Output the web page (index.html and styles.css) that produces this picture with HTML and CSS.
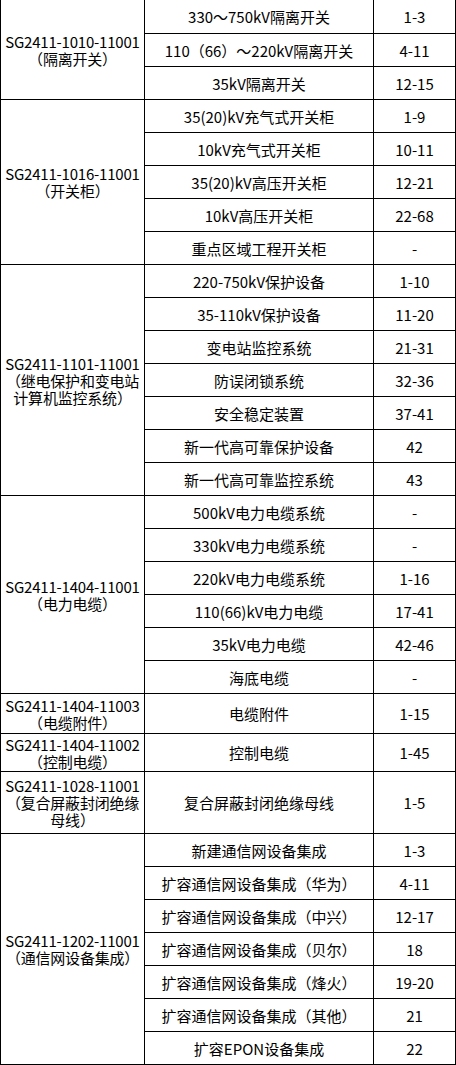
FILE: index.html
```html
<!DOCTYPE html>
<html lang="zh-CN">
<head>
<meta charset="utf-8">
<title>设备清单</title>
<link rel="stylesheet" href="styles.css">
</head>
<body>
<div class="table">
  <div class="code g3">SG2411-1010-11001<br>（隔离开关）</div>
  <div class="name">330～750kV隔离开关</div><div class="num">1-3</div>
  <div class="name">110（66）～220kV隔离开关</div><div class="num">4-11</div>
  <div class="name">35kV隔离开关</div><div class="num">12-15</div>

  <div class="code g5">SG2411-1016-11001<br>（开关柜）</div>
  <div class="name">35(20)kV充气式开关柜</div><div class="num">1-9</div>
  <div class="name">10kV充气式开关柜</div><div class="num">10-11</div>
  <div class="name">35(20)kV高压开关柜</div><div class="num">12-21</div>
  <div class="name">10kV高压开关柜</div><div class="num">22-68</div>
  <div class="name">重点区域工程开关柜</div><div class="num">-</div>

  <div class="code g7">SG2411-1101-11001<br>（继电保护和变电站<br>计算机监控系统）</div>
  <div class="name">220-750kV保护设备</div><div class="num">1-10</div>
  <div class="name">35-110kV保护设备</div><div class="num">11-20</div>
  <div class="name">变电站监控系统</div><div class="num">21-31</div>
  <div class="name">防误闭锁系统</div><div class="num">32-36</div>
  <div class="name">安全稳定装置</div><div class="num">37-41</div>
  <div class="name">新一代高可靠保护设备</div><div class="num">42</div>
  <div class="name">新一代高可靠监控系统</div><div class="num">43</div>

  <div class="code g6">SG2411-1404-11001<br>（电力电缆）</div>
  <div class="name">500kV电力电缆系统</div><div class="num">-</div>
  <div class="name">330kV电力电缆系统</div><div class="num">-</div>
  <div class="name">220kV电力电缆系统</div><div class="num">1-16</div>
  <div class="name">110(66)kV电力电缆</div><div class="num">17-41</div>
  <div class="name">35kV电力电缆</div><div class="num">42-46</div>
  <div class="name">海底电缆</div><div class="num">-</div>

  <div class="code">SG2411-1404-11003<br>（电缆附件）</div>
  <div class="name">电缆附件</div><div class="num">1-15</div>

  <div class="code">SG2411-1404-11002<br>（控制电缆）</div>
  <div class="name">控制电缆</div><div class="num">1-45</div>

  <div class="code">SG2411-1028-11001<br>（复合屏蔽封闭绝缘<br>母线）</div>
  <div class="name">复合屏蔽封闭绝缘母线</div><div class="num">1-5</div>

  <div class="code g7">SG2411-1202-11001<br>（通信网设备集成）</div>
  <div class="name">新建通信网设备集成</div><div class="num">1-3</div>
  <div class="name">扩容通信网设备集成（华为）</div><div class="num">4-11</div>
  <div class="name">扩容通信网设备集成（中兴）</div><div class="num">12-17</div>
  <div class="name">扩容通信网设备集成（贝尔）</div><div class="num">18</div>
  <div class="name">扩容通信网设备集成（烽火）</div><div class="num">19-20</div>
  <div class="name">扩容通信网设备集成（其他）</div><div class="num">21</div>
  <div class="name">扩容EPON设备集成</div><div class="num">22</div>
</div>
</body>
</html>
```

FILE: styles.css
```css
html, body {
  margin: 0;
  padding: 0;
  background: #fff;
}

.table {
  width: 456px;
  box-sizing: border-box;
  display: grid;
  grid-template-columns: 143px 228px 81px;
  grid-template-rows: 33px repeat(20, 32px) 39px 37px 61px repeat(7, 32px);
  gap: 1px;
  padding: 0 1px 1px 1px;
  background: #000;
  font-family: "Noto Sans CJK SC", "Liberation Sans", sans-serif;
  font-size: 15px;
  font-weight: 400;
  line-height: 17px;
  color: #000;
}

.code, .name, .num {
  background: #fff;
  display: flex;
  align-items: center;
  justify-content: center;
  text-align: center;
  white-space: nowrap;
}

.code {
  grid-column: 1;
  letter-spacing: -0.2px;
}
.name { grid-column: 2; }
.num { grid-column: 3; }

.g3 { grid-row: span 3; }
.g5 { grid-row: span 5; }
.g6 { grid-row: span 6; }
.g7 { grid-row: span 7; }
```
